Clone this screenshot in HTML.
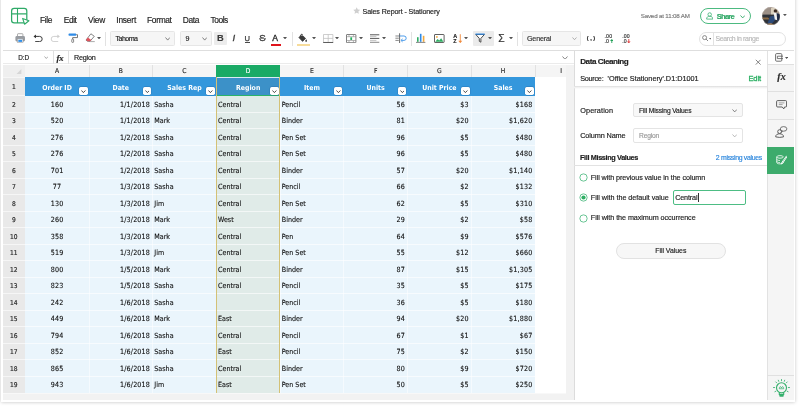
<!DOCTYPE html>
<html lang="en"><head><meta charset="utf-8"><title>Sales Report - Stationery</title>
<style>
*{box-sizing:border-box;margin:0;padding:0}
html,body{width:800px;height:408px;overflow:hidden;background:#fff}
body{font-family:"Liberation Sans",sans-serif;color:#222;position:relative}
.abs{position:absolute}
#frame{position:absolute;left:1.3px;top:-6px;width:793.5px;height:407.9px;background:#fff;box-shadow:0 .5px 3.5px rgba(0,0,0,.23)}
#app{position:absolute;left:2.6px;top:0;width:790.5px;height:400.1px;background:#fff;overflow:hidden;will-change:transform}
.t{position:absolute;white-space:nowrap;line-height:1;-webkit-text-stroke:.16px currentColor}
.cell{position:absolute;white-space:nowrap;font-family:'DejaVu Sans Condensed','Liberation Sans',sans-serif;font-size:7.1px;line-height:16.49px;color:#0c0c0c;height:16.49px;margin-top:1.15px;-webkit-text-stroke:.1px #0c0c0c}
.rh{position:absolute;left:0;width:21.75px;text-align:center;font-family:'DejaVu Sans Condensed','Liberation Sans',sans-serif;font-size:6.6px;color:#2c2c2c;line-height:16.49px;margin-top:1.15px;-webkit-text-stroke:.18px #2c2c2c}
.ch{position:absolute;text-align:center;font-family:'DejaVu Sans Condensed','Liberation Sans',sans-serif;font-size:6.7px;color:#2a2a2a;line-height:12.4px;height:12.4px;top:64.8px;-webkit-text-stroke:.15px currentColor}
.hd{position:absolute;text-align:center;font-family:'DejaVu Sans Condensed','Liberation Sans',sans-serif;font-size:6.9px;font-weight:bold;color:#fff;line-height:18.75px;height:18.75px;top:78.5px}
.fb{position:absolute;width:8.7px;height:7.9px;background:#fff;border-radius:1.7px;top:87.35px;box-shadow:0 0 0 .4px rgba(30,90,150,.5)}
</style></head><body>
<div id="frame"></div>
<div id="app">

<div class="abs" style="left:0;top:64.6px;width:563.4px;height:12.4px;background:#f5f5f5"></div>
<div class="abs" style="left:0;top:64.6px;width:22.15px;height:327.97px;background:#e9e9e9"></div>
<div class="abs" style="left:0;top:64.6px;width:22.15px;height:12.4px;background:#efefef"></div>
<svg class="abs" style="left:13.2px;top:68.8px" width="5.4" height="5.6" viewBox="0 0 5.4 5.6"><path d="M5.4 0V5.6H0Z" fill="#d6d6d6"/></svg>
<div class="abs" style="left:22.15px;top:77.0px;width:509.84px;height:18.75px;background:#3497dc"></div>
<div class="abs" style="left:22.15px;top:95.75px;width:509.84px;height:296.82px;background:#eaf5fc"></div>
<div class="abs" style="left:213.34px;top:64.6px;width:63.73px;height:12.4px;background:#1aaa66"></div>
<div class="abs" style="left:213.34px;top:95.75px;width:63.73px;height:296.82px;background:#e0ebe8"></div>
<div class="abs" style="left:213.34px;top:77.0px;width:63.73px;height:18.75px;background:#3c91c8;border:1.1px solid rgba(255,255,255,.82);border-bottom:none"></div>
<div class="abs" style="left:22.15px;top:111.84px;width:509.84px;height:.8px;background:rgba(255,255,255,.6)"></div>
<div class="abs" style="left:22.15px;top:128.33px;width:509.84px;height:.8px;background:rgba(255,255,255,.6)"></div>
<div class="abs" style="left:22.15px;top:144.82px;width:509.84px;height:.8px;background:rgba(255,255,255,.6)"></div>
<div class="abs" style="left:22.15px;top:161.31px;width:509.84px;height:.8px;background:rgba(255,255,255,.6)"></div>
<div class="abs" style="left:22.15px;top:177.80px;width:509.84px;height:.8px;background:rgba(255,255,255,.6)"></div>
<div class="abs" style="left:22.15px;top:194.29px;width:509.84px;height:.8px;background:rgba(255,255,255,.6)"></div>
<div class="abs" style="left:22.15px;top:210.78px;width:509.84px;height:.8px;background:rgba(255,255,255,.6)"></div>
<div class="abs" style="left:22.15px;top:227.27px;width:509.84px;height:.8px;background:rgba(255,255,255,.6)"></div>
<div class="abs" style="left:22.15px;top:243.76px;width:509.84px;height:.8px;background:rgba(255,255,255,.6)"></div>
<div class="abs" style="left:22.15px;top:260.25px;width:509.84px;height:.8px;background:rgba(255,255,255,.6)"></div>
<div class="abs" style="left:22.15px;top:276.74px;width:509.84px;height:.8px;background:rgba(255,255,255,.6)"></div>
<div class="abs" style="left:22.15px;top:293.23px;width:509.84px;height:.8px;background:rgba(255,255,255,.6)"></div>
<div class="abs" style="left:22.15px;top:309.72px;width:509.84px;height:.8px;background:rgba(255,255,255,.6)"></div>
<div class="abs" style="left:22.15px;top:326.21px;width:509.84px;height:.8px;background:rgba(255,255,255,.6)"></div>
<div class="abs" style="left:22.15px;top:342.70px;width:509.84px;height:.8px;background:rgba(255,255,255,.6)"></div>
<div class="abs" style="left:22.15px;top:359.19px;width:509.84px;height:.8px;background:rgba(255,255,255,.6)"></div>
<div class="abs" style="left:22.15px;top:375.68px;width:509.84px;height:.8px;background:rgba(255,255,255,.6)"></div>
<div class="abs" style="left:85.53px;top:95.75px;width:.7px;height:296.82px;background:rgba(255,255,255,.5)"></div>
<div class="abs" style="left:149.26px;top:95.75px;width:.7px;height:296.82px;background:rgba(255,255,255,.5)"></div>
<div class="abs" style="left:212.99px;top:95.75px;width:.7px;height:296.82px;background:rgba(255,255,255,.5)"></div>
<div class="abs" style="left:276.72px;top:95.75px;width:.7px;height:296.82px;background:rgba(255,255,255,.5)"></div>
<div class="abs" style="left:340.45px;top:95.75px;width:.7px;height:296.82px;background:rgba(255,255,255,.5)"></div>
<div class="abs" style="left:404.18px;top:95.75px;width:.7px;height:296.82px;background:rgba(255,255,255,.5)"></div>
<div class="abs" style="left:467.91px;top:95.75px;width:.7px;height:296.82px;background:rgba(255,255,255,.5)"></div>
<div class="abs" style="left:0;top:95.35px;width:22.15px;height:.8px;background:#f6f6f6"></div>
<div class="abs" style="left:0;top:111.84px;width:22.15px;height:.8px;background:#f6f6f6"></div>
<div class="abs" style="left:0;top:128.33px;width:22.15px;height:.8px;background:#f6f6f6"></div>
<div class="abs" style="left:0;top:144.82px;width:22.15px;height:.8px;background:#f6f6f6"></div>
<div class="abs" style="left:0;top:161.31px;width:22.15px;height:.8px;background:#f6f6f6"></div>
<div class="abs" style="left:0;top:177.80px;width:22.15px;height:.8px;background:#f6f6f6"></div>
<div class="abs" style="left:0;top:194.29px;width:22.15px;height:.8px;background:#f6f6f6"></div>
<div class="abs" style="left:0;top:210.78px;width:22.15px;height:.8px;background:#f6f6f6"></div>
<div class="abs" style="left:0;top:227.27px;width:22.15px;height:.8px;background:#f6f6f6"></div>
<div class="abs" style="left:0;top:243.76px;width:22.15px;height:.8px;background:#f6f6f6"></div>
<div class="abs" style="left:0;top:260.25px;width:22.15px;height:.8px;background:#f6f6f6"></div>
<div class="abs" style="left:0;top:276.74px;width:22.15px;height:.8px;background:#f6f6f6"></div>
<div class="abs" style="left:0;top:293.23px;width:22.15px;height:.8px;background:#f6f6f6"></div>
<div class="abs" style="left:0;top:309.72px;width:22.15px;height:.8px;background:#f6f6f6"></div>
<div class="abs" style="left:0;top:326.21px;width:22.15px;height:.8px;background:#f6f6f6"></div>
<div class="abs" style="left:0;top:342.70px;width:22.15px;height:.8px;background:#f6f6f6"></div>
<div class="abs" style="left:0;top:359.19px;width:22.15px;height:.8px;background:#f6f6f6"></div>
<div class="abs" style="left:0;top:375.68px;width:22.15px;height:.8px;background:#f6f6f6"></div>
<div class="abs" style="left:0;top:76.6px;width:22.15px;height:.8px;background:#f6f6f6"></div>
<div class="abs" style="left:212.94px;top:77.0px;width:.75px;height:315.57px;background:#d3c176"></div>
<div class="abs" style="left:276.27px;top:77.0px;width:.75px;height:315.57px;background:#d3c176"></div>
<div class="abs" style="left:213.94px;top:95.05px;width:62.529999999999994px;height:1.3px;background:#2bb36a"></div>
<div class="ch" style="left:22.15px;width:63.73px;color:#2a2a2a">A</div>
<div class="abs" style="left:85.53px;top:64.6px;width:.7px;height:12.4px;background:#e2e2e2"></div>
<div class="ch" style="left:85.88px;width:63.73px;color:#2a2a2a">B</div>
<div class="abs" style="left:149.26px;top:64.6px;width:.7px;height:12.4px;background:#e2e2e2"></div>
<div class="ch" style="left:149.61px;width:63.73px;color:#2a2a2a">C</div>
<div class="ch" style="left:213.34px;width:63.73px;color:#fff">D</div>
<div class="ch" style="left:277.07px;width:63.73px;color:#2a2a2a">E</div>
<div class="abs" style="left:340.45px;top:64.6px;width:.7px;height:12.4px;background:#e2e2e2"></div>
<div class="ch" style="left:340.8px;width:63.73px;color:#2a2a2a">F</div>
<div class="abs" style="left:404.18px;top:64.6px;width:.7px;height:12.4px;background:#e2e2e2"></div>
<div class="ch" style="left:404.53px;width:63.73px;color:#2a2a2a">G</div>
<div class="abs" style="left:467.91px;top:64.6px;width:.7px;height:12.4px;background:#e2e2e2"></div>
<div class="ch" style="left:468.26px;width:63.73px;color:#2a2a2a">H</div>
<div class="abs" style="left:531.64px;top:64.6px;width:.7px;height:12.4px;background:#e2e2e2"></div>
<div class="ch" style="left:555.4px;width:5.4px">I</div>
<div class="hd" style="left:22.15px;width:63.73px">Order ID</div>
<div class="fb" style="left:75.88px"><svg style="position:absolute;left:2px;top:2.7px" width="4.8" height="3.2" viewBox="0 0 4.8 3.2"><path d="M.4 .5L2.4 2.6L4.4 .5" fill="none" stroke="#2b2b2b" stroke-width=".85"/></svg></div>
<div class="hd" style="left:85.88px;width:63.73px">Date</div>
<div class="fb" style="left:139.61px"><svg style="position:absolute;left:2px;top:2.7px" width="4.8" height="3.2" viewBox="0 0 4.8 3.2"><path d="M.4 .5L2.4 2.6L4.4 .5" fill="none" stroke="#2b2b2b" stroke-width=".85"/></svg></div>
<div class="hd" style="left:149.61px;width:63.73px">Sales Rep</div>
<div class="fb" style="left:203.34px"><svg style="position:absolute;left:2px;top:2.7px" width="4.8" height="3.2" viewBox="0 0 4.8 3.2"><path d="M.4 .5L2.4 2.6L4.4 .5" fill="none" stroke="#2b2b2b" stroke-width=".85"/></svg></div>
<div class="hd" style="left:213.34px;width:63.73px">Region</div>
<div class="fb" style="left:267.07px"><svg style="position:absolute;left:2px;top:2.7px" width="4.8" height="3.2" viewBox="0 0 4.8 3.2"><path d="M.4 .5L2.4 2.6L4.4 .5" fill="none" stroke="#2b2b2b" stroke-width=".85"/></svg></div>
<div class="hd" style="left:277.07px;width:63.73px">Item</div>
<div class="fb" style="left:330.80px"><svg style="position:absolute;left:2px;top:2.7px" width="4.8" height="3.2" viewBox="0 0 4.8 3.2"><path d="M.4 .5L2.4 2.6L4.4 .5" fill="none" stroke="#2b2b2b" stroke-width=".85"/></svg></div>
<div class="hd" style="left:340.8px;width:63.73px">Units</div>
<div class="fb" style="left:394.53px"><svg style="position:absolute;left:2px;top:2.7px" width="4.8" height="3.2" viewBox="0 0 4.8 3.2"><path d="M.4 .5L2.4 2.6L4.4 .5" fill="none" stroke="#2b2b2b" stroke-width=".85"/></svg></div>
<div class="hd" style="left:404.53px;width:63.73px">Unit Price</div>
<div class="fb" style="left:458.26px"><svg style="position:absolute;left:2px;top:2.7px" width="4.8" height="3.2" viewBox="0 0 4.8 3.2"><path d="M.4 .5L2.4 2.6L4.4 .5" fill="none" stroke="#2b2b2b" stroke-width=".85"/></svg></div>
<div class="hd" style="left:468.26px;width:63.73px">Sales</div>
<div class="fb" style="left:521.99px"><svg style="position:absolute;left:2px;top:2.7px" width="4.8" height="3.2" viewBox="0 0 4.8 3.2"><path d="M.4 .5L2.4 2.6L4.4 .5" fill="none" stroke="#2b2b2b" stroke-width=".85"/></svg></div>
<div class="rh" style="top:77.0px;line-height:18.75px">1</div>
<div class="rh" style="top:95.75px">2</div>
<div class="rh" style="top:112.24px">3</div>
<div class="rh" style="top:128.73px">4</div>
<div class="rh" style="top:145.22px">5</div>
<div class="rh" style="top:161.71px">6</div>
<div class="rh" style="top:178.20px">7</div>
<div class="rh" style="top:194.69px">8</div>
<div class="rh" style="top:211.18px">9</div>
<div class="rh" style="top:227.67px">10</div>
<div class="rh" style="top:244.16px">11</div>
<div class="rh" style="top:260.65px">12</div>
<div class="rh" style="top:277.14px">13</div>
<div class="rh" style="top:293.63px">14</div>
<div class="rh" style="top:310.12px">15</div>
<div class="rh" style="top:326.61px">16</div>
<div class="rh" style="top:343.10px">17</div>
<div class="rh" style="top:359.59px">18</div>
<div class="rh" style="top:376.08px">19</div>
<div class="cell" style="left:22.25px;top:95.75px;width:63.73px;text-align:center;letter-spacing:.18px">160</div>
<div class="cell" style="left:85.88px;top:95.75px;width:61.23px;text-align:right;letter-spacing:.18px">1/1/2018</div>
<div class="cell" style="left:151.31px;top:95.75px">Sasha</div>
<div class="cell" style="left:215.04px;top:95.75px">Central</div>
<div class="cell" style="left:278.77px;top:95.75px">Pencil</div>
<div class="cell" style="left:340.8px;top:95.75px;width:61.23px;text-align:right;letter-spacing:.18px">56</div>
<div class="cell" style="left:404.53px;top:95.75px;width:61.23px;text-align:right;letter-spacing:.18px">$3</div>
<div class="cell" style="left:468.26px;top:95.75px;width:61.23px;text-align:right;letter-spacing:.18px">$168</div>
<div class="cell" style="left:22.25px;top:112.24px;width:63.73px;text-align:center;letter-spacing:.18px">520</div>
<div class="cell" style="left:85.88px;top:112.24px;width:61.23px;text-align:right;letter-spacing:.18px">1/1/2018</div>
<div class="cell" style="left:151.31px;top:112.24px">Mark</div>
<div class="cell" style="left:215.04px;top:112.24px">Central</div>
<div class="cell" style="left:278.77px;top:112.24px">Binder</div>
<div class="cell" style="left:340.8px;top:112.24px;width:61.23px;text-align:right;letter-spacing:.18px">81</div>
<div class="cell" style="left:404.53px;top:112.24px;width:61.23px;text-align:right;letter-spacing:.18px">$20</div>
<div class="cell" style="left:468.26px;top:112.24px;width:61.23px;text-align:right;letter-spacing:.18px">$1,620</div>
<div class="cell" style="left:22.25px;top:128.73px;width:63.73px;text-align:center;letter-spacing:.18px">276</div>
<div class="cell" style="left:85.88px;top:128.73px;width:61.23px;text-align:right;letter-spacing:.18px">1/2/2018</div>
<div class="cell" style="left:151.31px;top:128.73px">Sasha</div>
<div class="cell" style="left:215.04px;top:128.73px">Central</div>
<div class="cell" style="left:278.77px;top:128.73px">Pen Set</div>
<div class="cell" style="left:340.8px;top:128.73px;width:61.23px;text-align:right;letter-spacing:.18px">96</div>
<div class="cell" style="left:404.53px;top:128.73px;width:61.23px;text-align:right;letter-spacing:.18px">$5</div>
<div class="cell" style="left:468.26px;top:128.73px;width:61.23px;text-align:right;letter-spacing:.18px">$480</div>
<div class="cell" style="left:22.25px;top:145.22px;width:63.73px;text-align:center;letter-spacing:.18px">276</div>
<div class="cell" style="left:85.88px;top:145.22px;width:61.23px;text-align:right;letter-spacing:.18px">1/2/2018</div>
<div class="cell" style="left:151.31px;top:145.22px">Sasha</div>
<div class="cell" style="left:215.04px;top:145.22px">Central</div>
<div class="cell" style="left:278.77px;top:145.22px">Pen Set</div>
<div class="cell" style="left:340.8px;top:145.22px;width:61.23px;text-align:right;letter-spacing:.18px">96</div>
<div class="cell" style="left:404.53px;top:145.22px;width:61.23px;text-align:right;letter-spacing:.18px">$5</div>
<div class="cell" style="left:468.26px;top:145.22px;width:61.23px;text-align:right;letter-spacing:.18px">$480</div>
<div class="cell" style="left:22.25px;top:161.71px;width:63.73px;text-align:center;letter-spacing:.18px">701</div>
<div class="cell" style="left:85.88px;top:161.71px;width:61.23px;text-align:right;letter-spacing:.18px">1/2/2018</div>
<div class="cell" style="left:151.31px;top:161.71px">Sasha</div>
<div class="cell" style="left:215.04px;top:161.71px">Central</div>
<div class="cell" style="left:278.77px;top:161.71px">Binder</div>
<div class="cell" style="left:340.8px;top:161.71px;width:61.23px;text-align:right;letter-spacing:.18px">57</div>
<div class="cell" style="left:404.53px;top:161.71px;width:61.23px;text-align:right;letter-spacing:.18px">$20</div>
<div class="cell" style="left:468.26px;top:161.71px;width:61.23px;text-align:right;letter-spacing:.18px">$1,140</div>
<div class="cell" style="left:22.25px;top:178.20px;width:63.73px;text-align:center;letter-spacing:.18px">77</div>
<div class="cell" style="left:85.88px;top:178.20px;width:61.23px;text-align:right;letter-spacing:.18px">1/3/2018</div>
<div class="cell" style="left:151.31px;top:178.20px">Sasha</div>
<div class="cell" style="left:215.04px;top:178.20px">Central</div>
<div class="cell" style="left:278.77px;top:178.20px">Pencil</div>
<div class="cell" style="left:340.8px;top:178.20px;width:61.23px;text-align:right;letter-spacing:.18px">66</div>
<div class="cell" style="left:404.53px;top:178.20px;width:61.23px;text-align:right;letter-spacing:.18px">$2</div>
<div class="cell" style="left:468.26px;top:178.20px;width:61.23px;text-align:right;letter-spacing:.18px">$132</div>
<div class="cell" style="left:22.25px;top:194.69px;width:63.73px;text-align:center;letter-spacing:.18px">130</div>
<div class="cell" style="left:85.88px;top:194.69px;width:61.23px;text-align:right;letter-spacing:.18px">1/3/2018</div>
<div class="cell" style="left:151.31px;top:194.69px">Jim</div>
<div class="cell" style="left:215.04px;top:194.69px">Central</div>
<div class="cell" style="left:278.77px;top:194.69px">Pen Set</div>
<div class="cell" style="left:340.8px;top:194.69px;width:61.23px;text-align:right;letter-spacing:.18px">62</div>
<div class="cell" style="left:404.53px;top:194.69px;width:61.23px;text-align:right;letter-spacing:.18px">$5</div>
<div class="cell" style="left:468.26px;top:194.69px;width:61.23px;text-align:right;letter-spacing:.18px">$310</div>
<div class="cell" style="left:22.25px;top:211.18px;width:63.73px;text-align:center;letter-spacing:.18px">260</div>
<div class="cell" style="left:85.88px;top:211.18px;width:61.23px;text-align:right;letter-spacing:.18px">1/3/2018</div>
<div class="cell" style="left:151.31px;top:211.18px">Mark</div>
<div class="cell" style="left:215.04px;top:211.18px">West</div>
<div class="cell" style="left:278.77px;top:211.18px">Binder</div>
<div class="cell" style="left:340.8px;top:211.18px;width:61.23px;text-align:right;letter-spacing:.18px">29</div>
<div class="cell" style="left:404.53px;top:211.18px;width:61.23px;text-align:right;letter-spacing:.18px">$2</div>
<div class="cell" style="left:468.26px;top:211.18px;width:61.23px;text-align:right;letter-spacing:.18px">$58</div>
<div class="cell" style="left:22.25px;top:227.67px;width:63.73px;text-align:center;letter-spacing:.18px">358</div>
<div class="cell" style="left:85.88px;top:227.67px;width:61.23px;text-align:right;letter-spacing:.18px">1/3/2018</div>
<div class="cell" style="left:151.31px;top:227.67px">Mark</div>
<div class="cell" style="left:215.04px;top:227.67px">Central</div>
<div class="cell" style="left:278.77px;top:227.67px">Pen</div>
<div class="cell" style="left:340.8px;top:227.67px;width:61.23px;text-align:right;letter-spacing:.18px">64</div>
<div class="cell" style="left:404.53px;top:227.67px;width:61.23px;text-align:right;letter-spacing:.18px">$9</div>
<div class="cell" style="left:468.26px;top:227.67px;width:61.23px;text-align:right;letter-spacing:.18px">$576</div>
<div class="cell" style="left:22.25px;top:244.16px;width:63.73px;text-align:center;letter-spacing:.18px">519</div>
<div class="cell" style="left:85.88px;top:244.16px;width:61.23px;text-align:right;letter-spacing:.18px">1/3/2018</div>
<div class="cell" style="left:151.31px;top:244.16px">Jim</div>
<div class="cell" style="left:215.04px;top:244.16px">Central</div>
<div class="cell" style="left:278.77px;top:244.16px">Pen Set</div>
<div class="cell" style="left:340.8px;top:244.16px;width:61.23px;text-align:right;letter-spacing:.18px">55</div>
<div class="cell" style="left:404.53px;top:244.16px;width:61.23px;text-align:right;letter-spacing:.18px">$12</div>
<div class="cell" style="left:468.26px;top:244.16px;width:61.23px;text-align:right;letter-spacing:.18px">$660</div>
<div class="cell" style="left:22.25px;top:260.65px;width:63.73px;text-align:center;letter-spacing:.18px">800</div>
<div class="cell" style="left:85.88px;top:260.65px;width:61.23px;text-align:right;letter-spacing:.18px">1/5/2018</div>
<div class="cell" style="left:151.31px;top:260.65px">Mark</div>
<div class="cell" style="left:215.04px;top:260.65px">Central</div>
<div class="cell" style="left:278.77px;top:260.65px">Binder</div>
<div class="cell" style="left:340.8px;top:260.65px;width:61.23px;text-align:right;letter-spacing:.18px">87</div>
<div class="cell" style="left:404.53px;top:260.65px;width:61.23px;text-align:right;letter-spacing:.18px">$15</div>
<div class="cell" style="left:468.26px;top:260.65px;width:61.23px;text-align:right;letter-spacing:.18px">$1,305</div>
<div class="cell" style="left:22.25px;top:277.14px;width:63.73px;text-align:center;letter-spacing:.18px">823</div>
<div class="cell" style="left:85.88px;top:277.14px;width:61.23px;text-align:right;letter-spacing:.18px">1/5/2018</div>
<div class="cell" style="left:151.31px;top:277.14px">Sasha</div>
<div class="cell" style="left:215.04px;top:277.14px">Central</div>
<div class="cell" style="left:278.77px;top:277.14px">Pencil</div>
<div class="cell" style="left:340.8px;top:277.14px;width:61.23px;text-align:right;letter-spacing:.18px">35</div>
<div class="cell" style="left:404.53px;top:277.14px;width:61.23px;text-align:right;letter-spacing:.18px">$5</div>
<div class="cell" style="left:468.26px;top:277.14px;width:61.23px;text-align:right;letter-spacing:.18px">$175</div>
<div class="cell" style="left:22.25px;top:293.63px;width:63.73px;text-align:center;letter-spacing:.18px">242</div>
<div class="cell" style="left:85.88px;top:293.63px;width:61.23px;text-align:right;letter-spacing:.18px">1/6/2018</div>
<div class="cell" style="left:151.31px;top:293.63px">Sasha</div>
<div class="cell" style="left:278.77px;top:293.63px">Pencil</div>
<div class="cell" style="left:340.8px;top:293.63px;width:61.23px;text-align:right;letter-spacing:.18px">36</div>
<div class="cell" style="left:404.53px;top:293.63px;width:61.23px;text-align:right;letter-spacing:.18px">$5</div>
<div class="cell" style="left:468.26px;top:293.63px;width:61.23px;text-align:right;letter-spacing:.18px">$180</div>
<div class="cell" style="left:22.25px;top:310.12px;width:63.73px;text-align:center;letter-spacing:.18px">449</div>
<div class="cell" style="left:85.88px;top:310.12px;width:61.23px;text-align:right;letter-spacing:.18px">1/6/2018</div>
<div class="cell" style="left:151.31px;top:310.12px">Mark</div>
<div class="cell" style="left:215.04px;top:310.12px">East</div>
<div class="cell" style="left:278.77px;top:310.12px">Binder</div>
<div class="cell" style="left:340.8px;top:310.12px;width:61.23px;text-align:right;letter-spacing:.18px">94</div>
<div class="cell" style="left:404.53px;top:310.12px;width:61.23px;text-align:right;letter-spacing:.18px">$20</div>
<div class="cell" style="left:468.26px;top:310.12px;width:61.23px;text-align:right;letter-spacing:.18px">$1,880</div>
<div class="cell" style="left:22.25px;top:326.61px;width:63.73px;text-align:center;letter-spacing:.18px">794</div>
<div class="cell" style="left:85.88px;top:326.61px;width:61.23px;text-align:right;letter-spacing:.18px">1/6/2018</div>
<div class="cell" style="left:151.31px;top:326.61px">Sasha</div>
<div class="cell" style="left:215.04px;top:326.61px">Central</div>
<div class="cell" style="left:278.77px;top:326.61px">Pencil</div>
<div class="cell" style="left:340.8px;top:326.61px;width:61.23px;text-align:right;letter-spacing:.18px">67</div>
<div class="cell" style="left:404.53px;top:326.61px;width:61.23px;text-align:right;letter-spacing:.18px">$1</div>
<div class="cell" style="left:468.26px;top:326.61px;width:61.23px;text-align:right;letter-spacing:.18px">$67</div>
<div class="cell" style="left:22.25px;top:343.10px;width:63.73px;text-align:center;letter-spacing:.18px">852</div>
<div class="cell" style="left:85.88px;top:343.10px;width:61.23px;text-align:right;letter-spacing:.18px">1/6/2018</div>
<div class="cell" style="left:151.31px;top:343.10px">Sasha</div>
<div class="cell" style="left:215.04px;top:343.10px">East</div>
<div class="cell" style="left:278.77px;top:343.10px">Pencil</div>
<div class="cell" style="left:340.8px;top:343.10px;width:61.23px;text-align:right;letter-spacing:.18px">75</div>
<div class="cell" style="left:404.53px;top:343.10px;width:61.23px;text-align:right;letter-spacing:.18px">$2</div>
<div class="cell" style="left:468.26px;top:343.10px;width:61.23px;text-align:right;letter-spacing:.18px">$150</div>
<div class="cell" style="left:22.25px;top:359.59px;width:63.73px;text-align:center;letter-spacing:.18px">865</div>
<div class="cell" style="left:85.88px;top:359.59px;width:61.23px;text-align:right;letter-spacing:.18px">1/6/2018</div>
<div class="cell" style="left:151.31px;top:359.59px">Sasha</div>
<div class="cell" style="left:215.04px;top:359.59px">Central</div>
<div class="cell" style="left:278.77px;top:359.59px">Binder</div>
<div class="cell" style="left:340.8px;top:359.59px;width:61.23px;text-align:right;letter-spacing:.18px">80</div>
<div class="cell" style="left:404.53px;top:359.59px;width:61.23px;text-align:right;letter-spacing:.18px">$9</div>
<div class="cell" style="left:468.26px;top:359.59px;width:61.23px;text-align:right;letter-spacing:.18px">$720</div>
<div class="cell" style="left:22.25px;top:376.08px;width:63.73px;text-align:center;letter-spacing:.18px">943</div>
<div class="cell" style="left:85.88px;top:376.08px;width:61.23px;text-align:right;letter-spacing:.18px">1/6/2018</div>
<div class="cell" style="left:151.31px;top:376.08px">Jim</div>
<div class="cell" style="left:215.04px;top:376.08px">East</div>
<div class="cell" style="left:278.77px;top:376.08px">Pen Set</div>
<div class="cell" style="left:340.8px;top:376.08px;width:61.23px;text-align:right;letter-spacing:.18px">50</div>
<div class="cell" style="left:404.53px;top:376.08px;width:61.23px;text-align:right;letter-spacing:.18px">$5</div>
<div class="cell" style="left:468.26px;top:376.08px;width:61.23px;text-align:right;letter-spacing:.18px">$250</div>
<div class="abs" style="left:0;top:392.57px;width:571.4px;height:7.53px;background:#f2f2f2;border-top:.9px solid #f8f8f8"></div>
<div class="abs" style="left:563.4px;top:64.6px;width:8px;height:335.5px;background:#f2f2f2"></div>
<svg class="abs" style="left:6.40px;top:6.00px" width="22" height="20" viewBox="0 0 22 20"><rect x="2.6" y="2.3" width="15.2" height="14.6" rx="2.6" fill="none" stroke="#2faa68" stroke-width="1.25"/><path d="M8.5 2.3V16.9M2.6 7.9H17.8" fill="none" stroke="#2faa68" stroke-width="1.1"/><path d="M13.6 12.4L19.9 14.8L15.6 18.2Z" fill="#fff" stroke="#2faa68" stroke-width="1.1" stroke-linejoin="round"/></svg>
<div class="t" style="left:37.00px;top:14.64px;font-family:'Liberation Sans',sans-serif;font-size:8.4px;line-height:10.92px;letter-spacing:-0.375px;color:#222;font-weight:normal;font-style:normal;">File</div>
<div class="t" style="left:60.75px;top:14.64px;font-family:'Liberation Sans',sans-serif;font-size:8.4px;line-height:10.92px;letter-spacing:-0.422px;color:#222;font-weight:normal;font-style:normal;">Edit</div>
<div class="t" style="left:85.00px;top:14.64px;font-family:'Liberation Sans',sans-serif;font-size:8.4px;line-height:10.92px;letter-spacing:-0.254px;color:#222;font-weight:normal;font-style:normal;">View</div>
<div class="t" style="left:113.25px;top:14.64px;font-family:'Liberation Sans',sans-serif;font-size:8.4px;line-height:10.92px;letter-spacing:-0.184px;color:#222;font-weight:normal;font-style:normal;">Insert</div>
<div class="t" style="left:144.10px;top:14.64px;font-family:'Liberation Sans',sans-serif;font-size:8.4px;line-height:10.92px;letter-spacing:-0.339px;color:#222;font-weight:normal;font-style:normal;">Format</div>
<div class="t" style="left:179.80px;top:14.64px;font-family:'Liberation Sans',sans-serif;font-size:8.4px;line-height:10.92px;letter-spacing:-0.376px;color:#222;font-weight:normal;font-style:normal;">Data</div>
<div class="t" style="left:207.60px;top:14.64px;font-family:'Liberation Sans',sans-serif;font-size:8.4px;line-height:10.92px;letter-spacing:-0.482px;color:#222;font-weight:normal;font-style:normal;">Tools</div>
<svg class="abs" style="left:350.00px;top:7.40px" width="7.4" height="7" viewBox="0 0 7.4 7"><path d="M3.7 .3L4.75 2.5L7.15 2.8L5.4 4.45L5.85 6.8L3.7 5.65L1.55 6.8L2 4.45L.25 2.8L2.65 2.5Z" fill="#cfcfcf"/></svg>
<div class="t" style="left:359.50px;top:7.70px;font-family:'Liberation Sans',sans-serif;font-size:7.1px;line-height:9.23px;letter-spacing:-0.081px;color:#222;font-weight:normal;font-style:normal;">Sales Report - Stationery</div>
<div class="t" style="left:637.70px;top:12.27px;font-family:'Liberation Sans',sans-serif;font-size:6.2px;line-height:8.06px;letter-spacing:-0.163px;color:#7a7a7a;font-weight:normal;font-style:normal;">Saved at 11:08 AM</div>
<div class="abs" style="left:697.4px;top:8.2px;width:51px;height:15.6px;border:.85px solid #4cba80;border-radius:8px;background:#fff"></div>
<svg class="abs" style="left:703.00px;top:11.60px" width="7.4" height="8" viewBox="0 0 7.4 8"><circle cx="3.7" cy="2.5" r="1.75" fill="none" stroke="#3bb273" stroke-width=".8"/><path d="M.6 7.1C.6 4.9 2 4.3 3.7 4.3S6.8 4.9 6.8 7.1Z" fill="none" stroke="#3bb273" stroke-width=".8" stroke-linejoin="round"/></svg>
<div class="t" style="left:713.75px;top:11.96px;font-family:'Liberation Sans',sans-serif;font-size:7.6px;line-height:9.88px;letter-spacing:-0.772px;color:#2fa866;font-weight:bold;font-style:normal;">Share</div>
<svg class="abs" style="left:737.00px;top:14.50px" width="5.4" height="3.4" viewBox="0 0 5.4 3.4"><path d="M.5 .5L2.7 2.9L4.9 .5" fill="none" stroke="#2fa866" stroke-width="0.9"/></svg>
<svg class="abs" style="left:759.20px;top:6.70px" width="18.2" height="18.2" viewBox="0 0 18.2 18.2"><defs><clipPath id="av"><circle cx="9.1" cy="9.1" r="9"/></clipPath></defs><g clip-path="url(#av)"><rect width="18.2" height="18.2" fill="#a89a8b"/><rect x="0" y="0" width="9" height="8" fill="#9c9087"/><rect x="9" y="1" width="5" height="9" fill="#d9cfbd"/><rect x="0" y="7.6" width="18.2" height="11" fill="#2f3238"/><path d="M0 10.6H6L8 12.6H0Z" fill="#8a6a45"/><path d="M5.5 16.5L8 9.6L12.4 8.6L13.6 12.4L9 17.6Z" fill="#2c4a78"/><path d="M11.6 5.6L15.6 6.2L16.4 13.5L12.8 12.6Z" fill="#f2f2f2"/><path d="M14.6 6L17.6 7L17.4 14.6L15.2 13.6Z" fill="#1f2a44"/><circle cx="13.4" cy="3.9" r="1.7" fill="#3a2a22"/><path d="M4 17L9 16L13 18.2H3Z" fill="#9b7a58"/></g><circle cx="9.1" cy="9.1" r="8.9" fill="none" stroke="rgba(255,255,255,.5)" stroke-width=".4"/></svg>
<svg class="abs" style="left:780.20px;top:14.00px" width="3.8" height="2.2" viewBox="0 0 3.8 2.2"><path d="M0 0H3.8L1.9 2.2Z" fill="#555"/></svg>
<div class="abs" style="left:0;top:50.2px;width:790.5px;height:.7px;background:#dedede"></div>
<svg class="abs" style="left:12.00px;top:32.60px" width="11" height="10.4" viewBox="0 0 11 10.4"><rect x="2.5" y=".7" width="5.4" height="3" rx=".6" fill="#fff" stroke="#8a8a8a" stroke-width=".7"/><rect x=".4" y="3" width="9.6" height="5.4" rx="1.4" fill="#989ca2"/><rect x="2.4" y="5.8" width="5.6" height="3.9" rx=".5" fill="#fff" stroke="#8a8a8a" stroke-width=".6"/><rect x="3.3" y="6.8" width="3.8" height="2.1" fill="#2f8fe8"/></svg>
<svg class="abs" style="left:29.70px;top:33.60px" width="10.4" height="8.4" viewBox="0 0 10.4 8.4"><path d="M1.4 2.4H6.6A2.6 2.6 0 0 1 6.6 7.6H2.2" fill="none" stroke="#333" stroke-width=".95"/><path d="M3 .5L.5 2.4L3 4.3Z" fill="#333"/></svg>
<svg class="abs" style="left:46.80px;top:33.60px" width="10.4" height="8.4" viewBox="0 0 10.4 8.4"><path d="M9 2.4H3.8A2.6 2.6 0 0 0 3.8 7.6H8.2" fill="none" stroke="#cdcdcd" stroke-width=".95"/><path d="M7.4 .5L9.9 2.4L7.4 4.3Z" fill="#cdcdcd"/></svg>
<svg class="abs" style="left:65.00px;top:33.20px" width="10.4" height="10" viewBox="0 0 10.4 10"><rect x=".5" y=".6" width="7.8" height="2.2" rx=".8" fill="#2f8be6"/><path d="M8.3 1.7H9.5V4.6H4.7V6.2" fill="none" stroke="#555" stroke-width=".8"/><rect x="3.8" y="6.1" width="1.8" height="3.3" rx=".6" fill="#fff" stroke="#555" stroke-width=".7"/></svg>
<svg class="abs" style="left:82.40px;top:33.40px" width="10.6" height="9.6" viewBox="0 0 10.6 9.6"><path d="M5.9 .8L9.3 3.3L5 8.3H2.6L1 7.1Z" fill="#fff" stroke="#666" stroke-width=".8" stroke-linejoin="round"/><path d="M2.9 4.6L6.3 7L5 8.3H2.6L1 7.1Z" fill="#e2525c"/><path d="M4.6 8.6H9.8" stroke="#888" stroke-width=".7"/></svg>
<svg class="abs" style="left:93.55px;top:37.00px" width="4.1" height="2.4" viewBox="0 0 4.1 2.4"><path d="M0 0H4.1L2.05 2.4Z" fill="#555"/></svg>
<div class="abs" style="left:102.10px;top:31.5px;width:.7px;height:14.0px;background:#e2e2e2"></div>
<div class="abs" style="left:106.9px;top:31.4px;width:65.5px;height:14.2px;background:#f6f6f6;border:.6px solid #e6e6e6;border-radius:1.5px"></div>
<div class="t" style="left:112.60px;top:35.09px;font-family:'Liberation Sans',sans-serif;font-size:7.1px;line-height:9.23px;letter-spacing:-0.558px;color:#222;font-weight:normal;font-style:normal;">Tahoma</div>
<svg class="abs" style="left:161.90px;top:37.10px" width="5.4" height="3.6" viewBox="0 0 5.4 3.6"><path d="M.5 .5L2.7 3.1L4.9 .5" fill="none" stroke="#666" stroke-width="0.8"/></svg>
<div class="abs" style="left:176.9px;top:31.4px;width:32.3px;height:14.2px;background:#f6f6f6;border:.6px solid #e6e6e6;border-radius:1.5px"></div>
<div class="t" style="left:182.60px;top:35.09px;font-family:'Liberation Sans',sans-serif;font-size:7.1px;line-height:9.23px;letter-spacing:-0.653px;color:#222;font-weight:normal;font-style:normal;">9</div>
<svg class="abs" style="left:198.70px;top:37.10px" width="5.4" height="3.6" viewBox="0 0 5.4 3.6"><path d="M.5 .5L2.7 3.1L4.9 .5" fill="none" stroke="#666" stroke-width="0.8"/></svg>
<div class="abs" style="left:211.0px;top:31.8px;width:12.8px;height:13px;background:#ececec;border-radius:1px"></div>
<div class="t" style="left:214.10px;top:32.16px;font-family:'Liberation Sans',sans-serif;font-size:9.3px;line-height:12.09px;letter-spacing:-0.919px;color:#3c3c3c;font-weight:bold;font-style:normal;">B</div>
<div class="t" style="left:229.40px;top:32.03px;font-family:'Liberation Sans',sans-serif;font-size:9.5px;line-height:12.35px;letter-spacing:0.959px;color:#3c3c3c;font-weight:normal;font-style:italic;-webkit-text-stroke:.35px #3c3c3c;">I</div>
<div class="t" style="left:241.50px;top:33.96px;font-family:'Liberation Sans',sans-serif;font-size:7.6px;line-height:9.88px;letter-spacing:0.116px;color:#3c3c3c;font-weight:normal;font-style:normal;-webkit-text-stroke:.25px #3c3c3c;">U</div>
<div class="abs" style="left:241.7px;top:41.9px;width:5.6px;height:.65px;background:#4a4a4a"></div>
<div class="t" style="left:256.30px;top:32.06px;font-family:'Liberation Sans',sans-serif;font-size:9.6px;line-height:12.48px;letter-spacing:-0.406px;color:#3c3c3c;font-weight:normal;font-style:normal;-webkit-text-stroke:.35px #3c3c3c;">S</div>
<div class="abs" style="left:256.2px;top:38.2px;width:7px;height:.55px;background:#8a8a8a"></div>
<div class="t" style="left:269.30px;top:33.48px;font-family:'Liberation Sans',sans-serif;font-size:8.6px;line-height:11.18px;letter-spacing:0.466px;color:#2a2a2a;font-weight:normal;font-style:normal;-webkit-text-stroke:.35px #2a2a2a;">A</div>
<div class="abs" style="left:268.0px;top:43.5px;width:10.4px;height:2.2px;background:#df141c"></div>
<svg class="abs" style="left:280.05px;top:36.60px" width="4.1" height="2.4" viewBox="0 0 4.1 2.4"><path d="M0 0H4.1L2.05 2.4Z" fill="#555"/></svg>
<div class="abs" style="left:289.00px;top:31.5px;width:.7px;height:14.0px;background:#e2e2e2"></div>
<svg class="abs" style="left:293.40px;top:33.00px" width="12" height="9.6" viewBox="0 0 12 9.6"><path d="M5.6 1.6L9.6 5.4L6.6 8.4L2.9 4.6Z" fill="#3a3a3a" stroke="#3a3a3a" stroke-width=".7" stroke-linejoin="round"/><path d="M5 2.5L7.3 1.9L8.6 3.2" fill="none" stroke="#fff" stroke-width=".55"/><path d="M4.4 3.4C4.2 1.6 5.6 .6 6.8 1.6" fill="none" stroke="#3a3a3a" stroke-width=".75"/><path d="M10.2 6.2C10.8 7.1 11 7.5 11 7.9A.85 .85 0 0 1 9.3 7.9C9.3 7.5 9.6 7.1 10.2 6.2Z" fill="#3a3a3a"/></svg>
<div class="abs" style="left:293.6px;top:43.5px;width:13.3px;height:2.2px;background:#f7dc9b"></div>
<svg class="abs" style="left:308.55px;top:36.60px" width="4.1" height="2.4" viewBox="0 0 4.1 2.4"><path d="M0 0H4.1L2.05 2.4Z" fill="#555"/></svg>
<svg class="abs" style="left:320.20px;top:33.80px" width="10.4" height="9.4" viewBox="0 0 10.4 9.4"><path d="M.5 .5H9.9V8.4H.5ZM5.2 .5V8.4M.5 4.4H9.9" fill="none" stroke="#bdbdbd" stroke-width=".75"/><path d="M.2 8.6H10.2" stroke="#444" stroke-width=".9"/></svg>
<svg class="abs" style="left:332.05px;top:36.60px" width="4.1" height="2.4" viewBox="0 0 4.1 2.4"><path d="M0 0H4.1L2.05 2.4Z" fill="#555"/></svg>
<svg class="abs" style="left:343.30px;top:33.80px" width="10.4" height="9.4" viewBox="0 0 10.4 9.4"><rect x=".5" y=".5" width="9.4" height="8.2" rx=".5" fill="none" stroke="#555" stroke-width=".75"/><path d="M.5 2.7H9.9M.5 6.5H9.9M3 .5V2.7M7.4 .5V2.7M3 6.5V8.7M7.4 6.5V8.7" fill="none" stroke="#888" stroke-width=".6"/><rect x="4.3" y="3.3" width="1.8" height="2.7" rx=".5" fill="#27ae60"/></svg>
<svg class="abs" style="left:356.25px;top:36.60px" width="4.1" height="2.4" viewBox="0 0 4.1 2.4"><path d="M0 0H4.1L2.05 2.4Z" fill="#555"/></svg>
<svg class="abs" style="left:367.20px;top:33.80px" width="9.6" height="9.4" viewBox="0 0 9.6 9.4"><path d="M0 .8H9.3M0 4.4H9.3" stroke="#444" stroke-width=".9"/><path d="M0 2.6H6.4M0 6.4H6.4" stroke="#b5b5b5" stroke-width=".8"/><path d="M0 8.3H9.3" stroke="#777" stroke-width=".9"/></svg>
<svg class="abs" style="left:378.95px;top:36.60px" width="4.1" height="2.4" viewBox="0 0 4.1 2.4"><path d="M0 0H4.1L2.05 2.4Z" fill="#555"/></svg>
<svg class="abs" style="left:391.60px;top:33.00px" width="12" height="10.4" viewBox="0 0 12 10.4"><path d="M4.6 .3V10.1" stroke="#444" stroke-width=".8"/><path d="M.4 3H4.6M.4 5.2H3.8M.4 7.4H3.8" stroke="#555" stroke-width=".7"/><path d="M4.6 3H9A2.2 2.2 0 0 1 9 7.4H6.6" fill="none" stroke="#2f8be6" stroke-width=".85"/><path d="M7.6 5.9L5.9 7.4L7.6 8.9" fill="none" stroke="#2f8be6" stroke-width=".85"/></svg>
<div class="abs" style="left:408.40px;top:31.5px;width:.7px;height:14.0px;background:#e2e2e2"></div>
<svg class="abs" style="left:413.40px;top:33.40px" width="9.4" height="10" viewBox="0 0 9.4 10"><rect x="1" y="4.2" width="1.6" height="4.6" fill="#2fae63"/><rect x="3.9" y=".8" width="1.6" height="8" fill="#2f8be6"/><rect x="6.8" y="2.8" width="1.6" height="6" fill="#f2a93b"/><path d="M0 9.4H9.4" stroke="#666" stroke-width=".8"/></svg>
<svg class="abs" style="left:431.20px;top:33.80px" width="10.6" height="9" viewBox="0 0 10.6 9"><rect x=".5" y=".5" width="9.6" height="8" rx=".5" fill="#fff" stroke="#444" stroke-width=".85"/><circle cx="2.9" cy="2.9" r=".9" fill="#f2a93b"/><path d="M1.2 7.8L3.6 5L5.2 6.6L7.2 4.2L9.4 7.8Z" fill="#2fae63"/></svg>
<div class="t" style="left:450.20px;top:33.03px;font-family:'Liberation Sans',sans-serif;font-size:5.4px;line-height:7.02px;letter-spacing:0.294px;color:#222;font-weight:bold;font-style:normal;">A</div>
<div class="t" style="left:450.20px;top:38.03px;font-family:'Liberation Sans',sans-serif;font-size:5.4px;line-height:7.02px;letter-spacing:0.703px;color:#222;font-weight:bold;font-style:normal;">Z</div>
<svg class="abs" style="left:455.40px;top:33.60px" width="4.6" height="9.6" viewBox="0 0 4.6 9.6"><path d="M2.3 .2V8" stroke="#f08a3c" stroke-width=".9"/><path d="M.3 6.8L2.3 9.2L4.3 6.8Z" fill="#f08a3c"/></svg>
<svg class="abs" style="left:461.35px;top:36.60px" width="4.1" height="2.4" viewBox="0 0 4.1 2.4"><path d="M0 0H4.1L2.05 2.4Z" fill="#555"/></svg>
<div class="abs" style="left:470.0px;top:31.4px;width:21.2px;height:14.2px;background:#ebebeb;border-radius:1px"></div>
<svg class="abs" style="left:472.00px;top:33.40px" width="10.2" height="9.8" viewBox="0 0 10.2 9.8"><path d="M.8 1.5H9.4L5.9 5.4V9.2L4.3 8.3V5.4Z" fill="#fff" stroke="#3a3a3a" stroke-width=".9" stroke-linejoin="round"/><path d="M.5 1.1H9.7" stroke="#2f8be6" stroke-width="1.2"/></svg>
<svg class="abs" style="left:485.35px;top:36.60px" width="4.1" height="2.4" viewBox="0 0 4.1 2.4"><path d="M0 0H4.1L2.05 2.4Z" fill="#555"/></svg>
<div class="t" style="left:495.30px;top:32.00px;font-family:'Liberation Sans',sans-serif;font-size:10.4px;line-height:13.52px;letter-spacing:0.262px;color:#333;font-weight:normal;font-style:normal;">Σ</div>
<svg class="abs" style="left:506.05px;top:36.60px" width="4.1" height="2.4" viewBox="0 0 4.1 2.4"><path d="M0 0H4.1L2.05 2.4Z" fill="#555"/></svg>
<div class="abs" style="left:513.80px;top:31.5px;width:.7px;height:14.0px;background:#e2e2e2"></div>
<div class="abs" style="left:518.7px;top:31.4px;width:59.6px;height:14.2px;background:#f6f6f6;border:.6px solid #e6e6e6;border-radius:1.5px"></div>
<div class="t" style="left:524.00px;top:35.09px;font-family:'Liberation Sans',sans-serif;font-size:7.1px;line-height:9.23px;letter-spacing:-0.150px;color:#333;font-weight:normal;font-style:normal;">General</div>
<svg class="abs" style="left:569.10px;top:37.10px" width="5" height="3.2" viewBox="0 0 5 3.2"><path d="M.5 .5L2.5 2.7L4.5 .5" fill="none" stroke="#999" stroke-width="0.75"/></svg>
<div class="t" style="left:583.80px;top:34.56px;font-family:'Liberation Sans',sans-serif;font-size:5.6px;line-height:7.28px;letter-spacing:0.002px;color:#222;font-weight:bold;font-style:normal;">( , )</div>
<div class="t" style="left:601.40px;top:32.72px;font-family:'Liberation Sans',sans-serif;font-size:5.2px;line-height:6.76px;letter-spacing:0.260px;color:#333;font-weight:normal;font-style:normal;">.00</div>
<div class="t" style="left:601.40px;top:37.52px;font-family:'Liberation Sans',sans-serif;font-size:5.2px;line-height:6.76px;letter-spacing:0.136px;color:#333;font-weight:normal;font-style:normal;">.0</div>
<svg class="abs" style="left:606.70px;top:38.70px" width="3.6" height="4.4" viewBox="0 0 3.6 4.4"><path d="M1.8 4.4V1.4" stroke="#1e9e55" stroke-width=".9"/><path d="M0 2L1.8 0L3.6 2Z" fill="#1e9e55"/></svg>
<div class="t" style="left:619.20px;top:32.72px;font-family:'Liberation Sans',sans-serif;font-size:5.2px;line-height:6.76px;letter-spacing:0.060px;color:#333;font-weight:normal;font-style:normal;">.00</div>
<div class="t" style="left:619.20px;top:37.52px;font-family:'Liberation Sans',sans-serif;font-size:5.2px;line-height:6.76px;letter-spacing:0.036px;color:#333;font-weight:normal;font-style:normal;">.0</div>
<svg class="abs" style="left:624.30px;top:38.70px" width="3.6" height="4.4" viewBox="0 0 3.6 4.4"><path d="M1.8 0V3" stroke="#e03a3a" stroke-width=".9"/><path d="M0 2.4L1.8 4.4L3.6 2.4Z" fill="#e03a3a"/></svg>
<div class="abs" style="left:695.8px;top:31.8px;width:87.4px;height:13.8px;border:.7px solid #e2e2e2;border-radius:7px;background:#fff"></div>
<div class="abs" style="left:709.6px;top:32.2px;width:.6px;height:13px;background:#e2e2e2"></div>
<svg class="abs" style="left:699.00px;top:35.40px" width="6.4" height="6.6" viewBox="0 0 6.4 6.6"><circle cx="2.6" cy="2.6" r="2" fill="none" stroke="#666" stroke-width=".75"/><path d="M4.1 4.1L6 6" stroke="#666" stroke-width=".8"/></svg>
<svg class="abs" style="left:705.50px;top:38.40px" width="2.6" height="1.6" viewBox="0 0 2.6 1.6"><path d="M0 0H2.6L1.3 1.6Z" fill="#666"/></svg>
<div class="t" style="left:712.60px;top:35.42px;font-family:'Liberation Sans',sans-serif;font-size:6.9px;line-height:8.97px;letter-spacing:-0.350px;color:#b9b9b9;font-weight:normal;font-style:normal;">Search in range</div>
<div class="abs" style="left:0;top:50.9px;width:571px;height:13.6px;background:#fff;border-bottom:.6px solid #ebebeb"></div>
<div class="t" style="left:15.20px;top:53.74px;font-family:'Liberation Sans',sans-serif;font-size:6.4px;line-height:8.32px;letter-spacing:-0.072px;color:#222;font-weight:normal;font-style:normal;">D:D</div>
<svg class="abs" style="left:40.90px;top:56.10px" width="4.6" height="3" viewBox="0 0 4.6 3"><path d="M.5 .5L2.3 2.5L4.1 .5" fill="none" stroke="#888" stroke-width="0.7"/></svg>
<div class="abs" style="left:49.9px;top:51.4px;width:.6px;height:12.4px;background:#e0e0e0"></div>
<div class="t" style="left:53.40px;top:52.67px;font-family:'Liberation Serif',serif;font-size:8.6px;line-height:11.18px;letter-spacing:0.114px;color:#222;font-weight:bold;font-style:italic;">fx</div>
<div class="abs" style="left:65.0px;top:51.4px;width:.6px;height:12.4px;background:#e0e0e0"></div>
<div class="t" style="left:71.00px;top:53.12px;font-family:'Liberation Sans',sans-serif;font-size:7.2px;line-height:9.36px;letter-spacing:-0.197px;color:#222;font-weight:normal;font-style:normal;">Region</div>
<svg class="abs" style="left:559.40px;top:55.50px" width="6" height="3.8" viewBox="0 0 6 3.8"><path d="M.5 .5L3.0 3.3L5.5 .5" fill="none" stroke="#666" stroke-width="0.8"/></svg>
<div class="abs" style="left:571.4px;top:50.9px;width:192.39999999999998px;height:349.20000000000005px;background:#fff;border-left:.7px solid #dcdcdc"></div>
<div class="abs" style="left:571.4px;top:86.2px;width:192.39999999999998px;height:2.4px;background:linear-gradient(#dcdcdc,#f1f1f1 45%,rgba(255,255,255,0))"></div>
<div class="t" style="left:577.20px;top:56.63px;font-family:'Liberation Sans',sans-serif;font-size:8.1px;line-height:10.53px;letter-spacing:-0.445px;color:#222;font-weight:bold;font-style:normal;">Data Cleaning</div>
<svg class="abs" style="left:752.00px;top:58.60px" width="6.4" height="6.4" viewBox="0 0 6.4 6.4"><path d="M.8 .8L5.6 5.6M5.6 .8L.8 5.6" stroke="#666" stroke-width=".8"/></svg>
<div class="t" style="left:577.20px;top:73.85px;font-family:'Liberation Sans',sans-serif;font-size:7.3px;line-height:9.49px;letter-spacing:-0.279px;color:#222;font-weight:normal;font-style:normal;">Source:</div>
<div class="t" style="left:604.60px;top:73.85px;font-family:'Liberation Sans',sans-serif;font-size:7.3px;line-height:9.49px;letter-spacing:-0.017px;color:#222;font-weight:normal;font-style:normal;">&#x27;Office Stationery&#x27;.D1:D1001</div>
<div class="t" style="left:745.40px;top:73.72px;font-family:'Liberation Sans',sans-serif;font-size:7.5px;line-height:9.75px;letter-spacing:-0.084px;color:#27ae60;font-weight:normal;font-style:normal;-webkit-text-stroke:.3px #27ae60;">Edit</div>
<div class="t" style="left:577.20px;top:106.25px;font-family:'Liberation Sans',sans-serif;font-size:7.3px;line-height:9.49px;letter-spacing:0.106px;color:#222;font-weight:normal;font-style:normal;">Operation</div>
<div class="abs" style="left:630.4px;top:103px;width:109.4px;height:14.2px;background:#f8f8f8;border:.7px solid #e4e4e4;border-radius:2px"></div>
<div class="t" style="left:636.00px;top:106.95px;font-family:'Liberation Sans',sans-serif;font-size:6.7px;line-height:8.71px;letter-spacing:-0.131px;color:#222;font-weight:normal;font-style:normal;">Fill Missing Values</div>
<svg class="abs" style="left:728.90px;top:108.60px" width="5.4" height="3.4" viewBox="0 0 5.4 3.4"><path d="M.5 .5L2.7 2.9L4.9 .5" fill="none" stroke="#666" stroke-width="0.8"/></svg>
<div class="t" style="left:577.20px;top:131.25px;font-family:'Liberation Sans',sans-serif;font-size:7.3px;line-height:9.49px;letter-spacing:-0.122px;color:#222;font-weight:normal;font-style:normal;">Column Name</div>
<div class="abs" style="left:630.4px;top:128.4px;width:109.4px;height:14.2px;background:#fff;border:.7px solid #e4e4e4;border-radius:2px"></div>
<div class="t" style="left:636.00px;top:132.34px;font-family:'Liberation Sans',sans-serif;font-size:6.7px;line-height:8.71px;letter-spacing:-0.201px;color:#999;font-weight:normal;font-style:normal;">Region</div>
<svg class="abs" style="left:728.90px;top:133.90px" width="5.4" height="3.4" viewBox="0 0 5.4 3.4"><path d="M.5 .5L2.7 2.9L4.9 .5" fill="none" stroke="#aaa" stroke-width="0.8"/></svg>
<div class="t" style="left:577.00px;top:152.95px;font-family:'Liberation Sans',sans-serif;font-size:7.3px;line-height:9.49px;letter-spacing:-0.363px;color:#222;font-weight:bold;font-style:normal;">Fill Missing Values</div>
<div class="t" style="left:712.80px;top:153.57px;font-family:'Liberation Sans',sans-serif;font-size:6.9px;line-height:8.97px;letter-spacing:-0.296px;color:#2b86dd;font-weight:normal;font-style:normal;">2 missing values</div>
<div class="abs" style="left:571.4px;top:164.8px;width:192.39999999999998px;height:.7px;background:#e2e2e2"></div>
<svg class="abs" style="left:575.90px;top:173.40px" width="9" height="9" viewBox="0 0 9 9"><circle cx="4.5" cy="4.5" r="3.65" fill="#fff" stroke="#45b87b" stroke-width=".8"/></svg>
<svg class="abs" style="left:575.90px;top:193.30px" width="9" height="9" viewBox="0 0 9 9"><circle cx="4.5" cy="4.5" r="3.65" fill="#fff" stroke="#45b87b" stroke-width=".8"/><circle cx="4.5" cy="4.5" r="2.1" fill="#2fae63"/></svg>
<svg class="abs" style="left:575.90px;top:213.50px" width="9" height="9" viewBox="0 0 9 9"><circle cx="4.5" cy="4.5" r="3.65" fill="#fff" stroke="#45b87b" stroke-width=".8"/></svg>
<div class="t" style="left:587.80px;top:172.62px;font-family:'Liberation Sans',sans-serif;font-size:7.2px;line-height:9.36px;letter-spacing:-0.070px;color:#222;font-weight:normal;font-style:normal;">Fill with previous value in the column</div>
<div class="t" style="left:587.80px;top:192.92px;font-family:'Liberation Sans',sans-serif;font-size:7.2px;line-height:9.36px;letter-spacing:-0.027px;color:#222;font-weight:normal;font-style:normal;">Fill with the default value</div>
<div class="t" style="left:587.80px;top:213.32px;font-family:'Liberation Sans',sans-serif;font-size:7.2px;line-height:9.36px;letter-spacing:-0.058px;color:#222;font-weight:normal;font-style:normal;">Fill with the maximum occurrence</div>
<div class="abs" style="left:669.7px;top:190.4px;width:73.8px;height:14.2px;background:#fff;border:.95px solid #4dbd84;border-radius:2px"></div>
<div class="t" style="left:672.20px;top:192.92px;font-family:'Liberation Sans',sans-serif;font-size:7.2px;line-height:9.36px;letter-spacing:-0.139px;color:#222;font-weight:normal;font-style:normal;">Central</div>
<div class="abs" style="left:695.4px;top:193.4px;width:.6px;height:8.2px;background:#333"></div>
<div class="abs" style="left:613.4px;top:243px;width:109.6px;height:16.2px;background:#f7f7f7;border:.7px solid #e2e2e2;border-radius:8.2px"></div>
<div class="t" style="left:652.20px;top:246.51px;font-family:'Liberation Sans',sans-serif;font-size:6.9px;line-height:8.97px;letter-spacing:-0.007px;color:#222;font-weight:normal;font-style:normal;">Fill Values</div>
<div class="abs" style="left:763.8px;top:50.9px;width:26.800000000000068px;height:349.20000000000005px;background:#f5f5f5;border-left:.7px solid #e2e2e2"></div>
<div class="abs" style="left:764.5px;top:50.9px;width:26.800000000000068px;height:13px;background:#fff"></div>
<div class="abs" style="left:763.8px;top:63.6px;width:26.800000000000068px;height:.7px;background:#e0e0e0"></div>
<div class="abs" style="left:763.8px;top:91.0px;width:26.800000000000068px;height:.7px;background:#e0e0e0"></div>
<div class="abs" style="left:763.8px;top:119.10000000000001px;width:26.800000000000068px;height:.7px;background:#e0e0e0"></div>
<div class="abs" style="left:763.8px;top:146.6px;width:26.800000000000068px;height:.7px;background:#e0e0e0"></div>
<div class="abs" style="left:763.8px;top:374.5px;width:26.800000000000068px;height:.7px;background:#e0e0e0"></div>
<svg class="abs" style="left:772.00px;top:53.20px" width="9" height="9" viewBox="0 0 9 9"><rect x=".6" y=".6" width="6.2" height="7.6" rx="1" fill="none" stroke="#555" stroke-width=".85"/><path d="M2.4 3.2H8M2.4 5.6H8" stroke="#555" stroke-width=".8"/><path d="M2.4 3.2V5.6" stroke="#555" stroke-width=".8"/></svg>
<svg class="abs" style="left:782.20px;top:56.90px" width="3.2" height="2" viewBox="0 0 3.2 2"><path d="M0 0H3.2L1.6 2Z" fill="#555"/></svg>
<div class="t" style="left:774.30px;top:70.10px;font-family:'Liberation Serif',serif;font-size:10px;line-height:13.0px;letter-spacing:0.128px;color:#2a2a2a;font-weight:bold;font-style:italic;">fx</div>
<svg class="abs" style="left:773.00px;top:99.80px" width="11.2" height="9.6" viewBox="0 0 11.2 9.6"><path d="M1.6 .6H9.6A1 1 0 0 1 10.6 1.6V6A1 1 0 0 1 9.6 7H8.6L7.8 8.9L6.2 7H1.6A1 1 0 0 1 .6 6V1.6A1 1 0 0 1 1.6 .6Z" fill="none" stroke="#444" stroke-width=".85" stroke-linejoin="round"/><path d="M2.8 2.9H8.4M2.8 4.6H6.6" stroke="#666" stroke-width=".6"/></svg>
<svg class="abs" style="left:772.00px;top:125.80px" width="12.8" height="12" viewBox="0 0 12.8 12"><ellipse cx="8.6" cy="2.9" rx="3.3" ry="2.3" fill="#f5f5f5" stroke="#555" stroke-width=".8"/><path d="M6.6 4.6L5.8 6.2L8 5.1" fill="#f5f5f5" stroke="#555" stroke-width=".7" stroke-linejoin="round"/><circle cx="4.6" cy="5.6" r="1.9" fill="#f5f5f5" stroke="#444" stroke-width=".85"/><path d="M.7 10.9C.7 8.6 2.4 7.8 4.6 7.8S8.5 8.6 8.5 10.9Q4.6 11.9 .7 10.9Z" fill="#f5f5f5" stroke="#444" stroke-width=".85" stroke-linejoin="round"/></svg>
<div class="abs" style="left:763.8px;top:146.9px;width:26.800000000000068px;height:26.9px;background:#3dab6c"></div>
<svg class="abs" style="left:772.80px;top:155.00px" width="11.6" height="10" viewBox="0 0 11.6 10"><ellipse cx="4" cy="1.9" rx="3.3" ry="1.3" fill="none" stroke="#fff" stroke-width=".8"/><path d="M.7 1.9V7.6C.7 8.4 2.2 8.9 4 8.9S7.3 8.4 7.3 7.6V6.4M.7 4.2C.7 5 2.2 5.5 4 5.5M.7 6.3C.7 7.1 2.2 7.6 4 7.6" fill="none" stroke="#fff" stroke-width=".75"/><path d="M10.6 .8L6 7.2L5.2 8.9L6.9 7.9L11.2 1.4" fill="none" stroke="#fff" stroke-width=".9" stroke-linejoin="round"/></svg>
<svg class="abs" style="left:768.80px;top:378.20px" width="19" height="22" viewBox="0 0 15.6 18"><circle cx="7.8" cy="8" r="4.1" fill="none" stroke="#35b06c" stroke-width=".9"/><path d="M6 11.6V13.4H9.6V11.6" fill="none" stroke="#35b06c" stroke-width=".9"/><rect x="6" y="13.6" width="3.6" height="1.7" rx=".6" fill="#35b06c"/><path d="M6 8.8C6 6.6 7.4 6.6 7.8 8.2C8.2 6.6 9.6 6.6 9.6 8.8Z" fill="none" stroke="#35b06c" stroke-width=".6"/><path d="M7.8 1.2V2.2M3.1 3.2L3.8 3.9M12.5 3.2L11.8 3.9M1.2 7.8H2.2M14.4 7.8H13.4M2.4 11.2L3.2 10.8M13.2 11.2L12.4 10.8M5.2 1.8L5.5 2.7M10.4 1.8L10.1 2.7" stroke="#35b06c" stroke-width=".7" stroke-linecap="round"/></svg>
</div></body></html>
